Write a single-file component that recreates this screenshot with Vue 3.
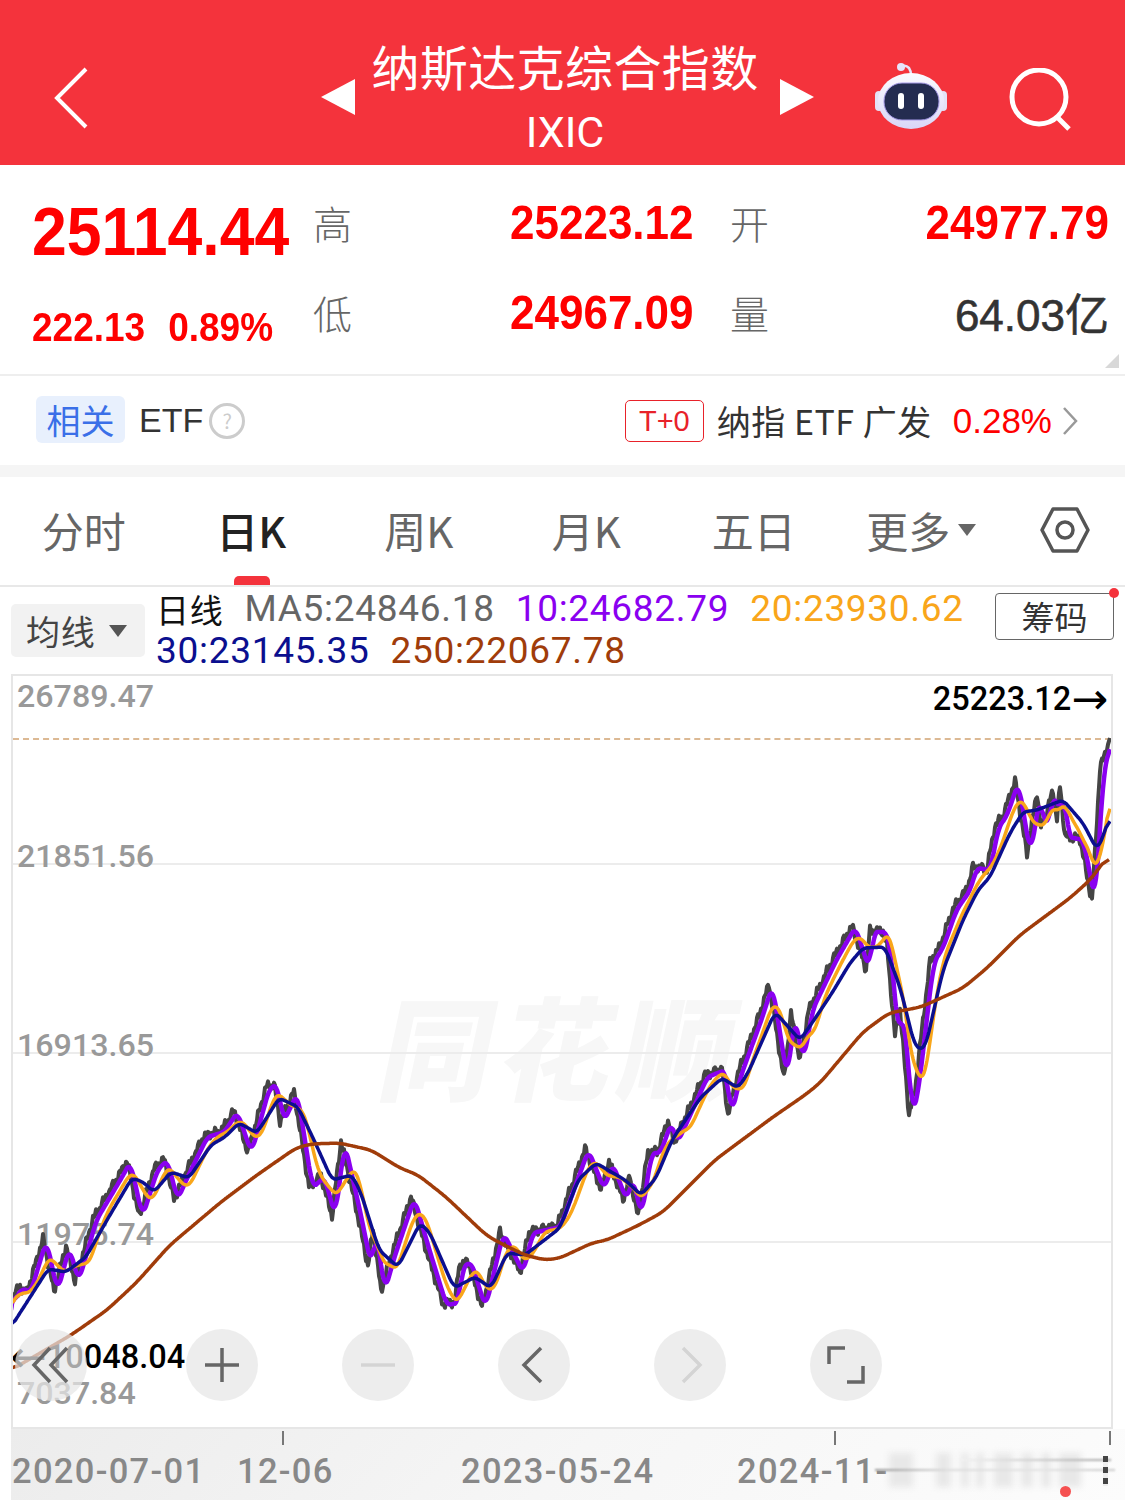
<template>
  <div class="page">
    <header class="top">
      <div class="top-left">
        <svg width="36" height="62" viewBox="0 0 36 62"><path d="M33 2 L4 31 L33 60" fill="none" stroke="#fff" stroke-width="4" /></svg>
      </div>
      <div class="top-mid">
        <i class="tri tri-l"></i>
        <div class="names">
          <div class="name">纳斯达克综合指数</div>
          <div class="code">IXIC</div>
        </div>
        <i class="tri tri-r"></i>
      </div>
      <div class="top-right">
        <svg class="robot" width="76" height="70" viewBox="0 0 76 70">
          <defs>
            <linearGradient id="shell" x1="0" y1="0" x2="0" y2="1">
              <stop offset="0" stop-color="#fbfbff" />
              <stop offset="1" stop-color="#d9d6f7" />
            </linearGradient>
          </defs>
          <path d="M29 7 C28 3 33 3 36 6 Q38 9 38 13" fill="none" stroke="#e6e4fa" stroke-width="2.5" />
          <circle cx="28" cy="5" r="4" fill="#e6e4fa" />
          <rect x="2" y="29" width="8" height="20" rx="4" fill="#e4e2f6" />
          <rect x="66" y="29" width="8" height="20" rx="4" fill="#e4e2f6" />
          <ellipse cx="38" cy="39" rx="33" ry="28" fill="url(#shell)" />
          <rect x="11" y="21" width="55" height="37" rx="18" fill="#242c50" stroke="#a79be8" stroke-width="1" />
          <rect x="25" y="31" width="6" height="16" rx="3" fill="#fff" />
          <rect x="45" y="31" width="6" height="16" rx="3" fill="#fff" />
        </svg>
        <svg class="search" width="64" height="64" viewBox="0 0 64 64">
          <circle cx="30" cy="29" r="27" fill="none" stroke="#fff" stroke-width="5" />
          <path d="M48 49 L60 61" stroke="#fff" stroke-width="5" />
        </svg>
      </div>
    </header>

    <section class="quote">
      <div class="q-main num">25114.44</div>
      <div class="q-label">高</div>
      <div class="q-val num">25223.12</div>
      <div class="q-label">开</div>
      <div class="q-val num right">24977.79</div>
      <div class="q-change num"><span>222.13</span><span>0.89%</span></div>
      <div class="q-label">低</div>
      <div class="q-val num">24967.09</div>
      <div class="q-label">量</div>
      <div class="q-vol right">64.03亿</div>
      <i class="corner"></i>
    </section>

    <section class="etf">
      <span class="etf-tag">相关</span>
      <span class="etf-word">ETF</span>
      <span class="etf-help">?</span>
      <span class="etf-fill"></span>
      <span class="etf-t0">T+0</span>
      <span class="etf-name">纳指 ETF 广发</span>
      <span class="etf-pct">0.28%</span>
      <svg width="16" height="30" viewBox="0 0 16 30"><path d="M2 2 L14 15 L2 28" fill="none" stroke="#999" stroke-width="2.5" /></svg>
    </section>

    <nav class="tabs">
      <div v-for="t in tabs" :key="t" class="tab" :class="{ active: t === '日K' }">{{ t }}</div>
      <div class="tab more">更多<i class="more-caret"></i></div>
      <div class="tab">
        <svg width="52" height="48" viewBox="0 0 52 48">
          <path d="M14 3 H38 L49 24 L38 45 H14 L3 24 Z" fill="none" stroke="#555" stroke-width="3.5" stroke-linejoin="round" />
          <circle cx="26" cy="24" r="8" fill="none" stroke="#555" stroke-width="3.5" />
        </svg>
      </div>
    </nav>

    <section class="ma">
      <div class="ma-btn">均线<i class="ma-caret"></i></div>
      <div class="ma-values">
        <span class="ma-day">日线</span>
        <span class="c-gray">MA5:24846.18</span>
        <span class="c-purple">10:24682.79</span>
        <span class="c-orange">20:23930.62</span>
        <span class="c-navy">30:23145.35</span>
        <span class="c-brown">250:22067.78</span>
      </div>
      <div class="chips">筹码<i class="chips-dot"></i></div>
    </section>

    <section class="chart">
      <div class="watermark">同花顺</div>
      <i v-for="g in grid" :key="g" class="grid-line" :style="{ top: g + 'px' }"></i>
      <i class="high-line"></i>
      <span v-for="l in yLabels" :key="l.text" class="y-label" :style="{ top: l.top + 'px' }">{{ l.text }}</span>
      <svg class="plot" width="1098" height="751" viewBox="13 676 1098 751">
        <polyline :points="gray" class="ln" stroke="#454545" stroke-width="4" />
        <polyline :points="purple" class="ln" stroke="#8a00f0" stroke-width="4.5" />
        <polyline :points="orange" class="ln" stroke="#f9a61a" stroke-width="3.5" />
        <polyline :points="navy" class="ln" stroke="#0b0f8f" stroke-width="3.5" />
        <polyline :points="brown" class="ln" stroke="#a03c0a" stroke-width="3.5" />
      </svg>
      <span class="mark-high">25223.12<b class="arrow">→</b></span>
      <span class="mark-low"><b class="arrow">←</b>10048.04</span>
      <div class="controls">
        <button class="ctl ctl-first">
          <svg width="40" height="40" viewBox="0 0 40 40"><path d="M19 3 L3 20 L19 37 M36 3 L20 20 L36 37" fill="none" stroke="#666" stroke-width="3.5" /></svg>
        </button>
        <button class="ctl">
          <svg width="36" height="36" viewBox="0 0 36 36"><path d="M18 1 V35 M1 18 H35" stroke="#666" stroke-width="3.5" /></svg>
        </button>
        <button class="ctl">
          <svg width="36" height="36" viewBox="0 0 36 36"><path d="M1 18 H35" stroke="#d4d4d4" stroke-width="3.5" /></svg>
        </button>
        <button class="ctl">
          <svg class="chev-l" width="24" height="38" viewBox="0 0 24 38"><path d="M21 2 L4 19 L21 36" fill="none" stroke="#666" stroke-width="3.5" /></svg>
        </button>
        <button class="ctl">
          <svg class="chev-r" width="24" height="38" viewBox="0 0 24 38"><path d="M3 2 L20 19 L3 36" fill="none" stroke="#d4d4d4" stroke-width="3.5" /></svg>
        </button>
        <button class="ctl">
          <svg width="38" height="38" viewBox="0 0 38 38"><path d="M18 2 H2 V18 M36 20 V36 H20" fill="none" stroke="#666" stroke-width="3.5" /></svg>
        </button>
      </div>
    </section>

    <footer class="axis">
      <i v-for="x in ticks" :key="x" class="tick" :style="{ left: x + 'px' }"></i>
      <span v-for="d in dates" :key="d.text" class="date" :style="{ left: d.left + 'px' }">{{ d.text }}</span>
      <i v-for="b in blurBars" :key="b[0]" class="blur-bar" :style="{ left: b[0] + 'px', width: b[1] + 'px' }"></i>
      <i class="blur-line"></i>
      <i class="blur-line upper"></i>
      <i class="blur-ticks"></i>
      <i class="red-dot"></i>
    </footer>
  </div>
</template>

<script setup>
const tabs = ['分时', '日K', '周K', '月K', '五日']

const grid = [187, 376, 565]
const yLabels = [
  { text: '26789.47', top: 0 },
  { text: '21851.56', top: 160 },
  { text: '16913.65', top: 349 },
  { text: '11975.74', top: 538 },
  { text: '7037.84', top: 697 },
]
const ticks = [271, 823, 1098]
const dates = [
  { text: '2020-07-01', left: 1 },
  { text: '12-06', left: 226 },
  { text: '2023-05-24', left: 450 },
  { text: '2024-11-', left: 726 },
]
const blurBars = [[878, 24], [925, 15], [950, 8], [965, 8], [983, 19], [1010, 12], [1030, 10], [1048, 22]]

// traced by eye from the picture, page coordinates
const priceKeys = [
  [11, 1310], [12, 1297], [20, 1288], [27, 1293], [43, 1240], [54, 1292], [66, 1247], [75, 1282], [93, 1220],
  [118, 1178], [127, 1162], [139, 1217], [154, 1170], [164, 1160], [174, 1200], [186, 1173], [204, 1137],
  [221, 1132], [234, 1112], [248, 1153], [266, 1088], [274, 1085], [280, 1122], [294, 1093], [309, 1188],
  [321, 1177], [332, 1217], [341, 1142], [357, 1213], [368, 1267], [373, 1230], [381, 1292], [391, 1257],
  [411, 1198], [425, 1247], [443, 1305], [455, 1303], [459, 1267], [468, 1262], [482, 1308], [500, 1233],
  [520, 1273], [529, 1233], [557, 1227], [585, 1150], [601, 1190], [609, 1163], [623, 1200], [630, 1178],
  [638, 1218], [648, 1153], [657, 1153], [668, 1122], [674, 1143], [704, 1077], [722, 1070], [728, 1115],
  [737, 1077], [759, 1017], [769, 985], [784, 1080], [791, 1015], [800, 1062], [809, 1010], [833, 960],
  [852, 927], [866, 970], [870, 932], [883, 932], [887, 947], [895, 1037], [900, 1010], [909, 1115],
  [915, 1092], [917, 1073], [930, 963], [940, 947], [953, 910], [967, 890], [973, 868], [987, 870],
  [995, 827], [1003, 817], [1015, 782], [1027, 855], [1037, 793], [1041, 830], [1053, 792], [1057, 820],
  [1060, 787], [1065, 837], [1080, 840], [1092, 903], [1100, 770], [1110, 738],
]
const navyKeys = [
  [11, 1327], [43, 1277], [48, 1269], [66, 1272], [86, 1257], [107, 1220], [132, 1178], [143, 1182],
  [154, 1192], [171, 1172], [189, 1178], [211, 1145], [225, 1137], [239, 1123], [257, 1133], [279, 1098],
  [298, 1107], [314, 1140], [332, 1180], [352, 1175], [361, 1193], [379, 1250], [398, 1267], [420, 1223],
  [430, 1233], [454, 1288], [475, 1277], [491, 1288], [507, 1253], [525, 1255], [560, 1228], [578, 1180],
  [596, 1163], [625, 1180], [641, 1195], [656, 1178], [672, 1140], [701, 1097], [722, 1078], [738, 1088],
  [748, 1073], [775, 1012], [800, 1040], [812, 1023], [832, 993], [850, 963], [863, 948], [885, 947],
  [900, 987], [915, 1047], [925, 1049], [943, 970], [963, 920], [978, 890], [990, 877], [1010, 833],
  [1023, 812], [1037, 810], [1063, 800], [1083, 823], [1097, 850], [1103, 837], [1110, 815],
]
const brownKeys = [
  [11, 1370], [71, 1335], [107, 1310], [136, 1283], [170, 1245], [221, 1202], [257, 1175], [296, 1148],
  [311, 1144], [339, 1143], [371, 1150], [400, 1168], [418, 1175], [446, 1197], [486, 1235], [500, 1243],
  [525, 1255], [545, 1260], [560, 1258], [592, 1243], [607, 1240], [639, 1225], [663, 1212], [715, 1160],
  [773, 1117], [805, 1095], [820, 1083], [863, 1032], [889, 1013], [921, 1007], [963, 988], [987, 968],
  [1020, 935], [1070, 898], [1090, 880], [1109, 855],
]

function sample(keys) {
  const out = []
  let k = 0
  for (let x = keys[0][0]; x <= keys[keys.length - 1][0]; x++) {
    while (keys[k + 1][0] < x) k++
    const [x0, y0] = keys[k]
    const [x1, y1] = keys[k + 1]
    out.push([x, y0 + ((y1 - y0) * (x - x0)) / (x1 - x0)])
  }
  return out
}

function trailing(pts, n) {
  return pts.map((p, i) => {
    const from = Math.max(0, i - n + 1)
    let sum = 0
    for (let j = from; j <= i; j++) sum += pts[j][1]
    return [p[0], sum / (i - from + 1)]
  })
}

function centered(pts, n) {
  return pts.map((p, i) => {
    const from = Math.max(0, i - n)
    const to = Math.min(pts.length - 1, i + n)
    let sum = 0
    for (let j = from; j <= to; j++) sum += pts[j][1]
    return [p[0], sum / (to - from + 1)]
  })
}

const str = (pts) => pts.map((p) => p[0] + ',' + p[1].toFixed(1)).join(' ')

const base = sample(priceKeys)
const jagged = base.map((p, i) => {
  const edge = i > base.length - 4 ? 0 : 1
  return [p[0], p[1] + edge * (Math.sin(i * 1.9) * 3 + Math.sin(i * 0.73) * 2.5 - 1)]
})

const gray = str(jagged)
const purple = str(trailing(base, 8))
const orange = str(centered(trailing(base, 20), 3))
const navy = str(centered(sample(navyKeys), 4))
const brown = str(centered(sample(brownKeys), 7))
</script>

<style scoped>
.page {
  --cjk: "Noto Sans CJK SC", sans-serif;
  width: 1125px;
  height: 1500px;
  overflow: hidden;
  background: #fff;
  font-family: "Liberation Sans", "Noto Sans CJK SC", sans-serif;
}

/* header */
.top {
  height: 165px;
  background: #f4333c;
  display: grid;
  grid-template-columns: 1fr auto 1fr;
  color: #fff;
}
.top-left {
  padding: 67px 0 0 53px;
}
.top-mid {
  display: flex;
  align-items: flex-start;
  padding-top: 30px;
  margin-left: 10px;
}
.names {
  text-align: center;
  margin: 0 21px 0 16px;
}
.name {
  font-family: var(--cjk);
  font-size: 48px;
  line-height: 70px;
  font-weight: 400;
  letter-spacing: 0.4px;
  white-space: nowrap;
}
.code {
  font-family: Roboto, sans-serif;
  font-weight: 400;
  font-size: 43px;
  line-height: 50px;
  margin-top: 7px;
}
.tri {
  width: 0;
  height: 0;
  margin-top: 49px;
  border-top: 18px solid transparent;
  border-bottom: 18px solid transparent;
}
.tri-l {
  border-right: 34px solid #fff;
}
.tri-r {
  border-left: 34px solid #fff;
}
.top-right {
  display: flex;
  justify-content: flex-end;
  padding: 62px 52px 0 0;
  gap: 60px;
  align-items: flex-start;
}
.search {
  margin-top: 6px;
}

/* quote */
.quote {
  position: relative;
  height: 211px;
  box-sizing: border-box;
  border-bottom: 2px solid #eee;
  padding: 12px 16px 0 32px;
  display: grid;
  grid-template-columns: 281px 197px 220px 60px 1fr;
  grid-template-rows: 90px 90px;
  align-items: center;
  color: #f00;
}
.num {
  font-weight: 700;
  transform: scaleY(1.1);
  white-space: nowrap;
}
.q-main {
  font-size: 62.5px;
  padding-top: 16px;
}
.q-val {
  font-size: 44px;
}
.q-change {
  font-size: 37px;
  display: flex;
  gap: 23px;
  padding-top: 28px;
}
.q-label {
  font-family: var(--cjk);
  font-size: 39px;
  color: #666;
  font-weight: 300;
}
.q-vol {
  font-size: 44px;
  color: #333;
  -webkit-text-stroke: 0.6px #333;
  white-space: nowrap;
}
.right {
  text-align: right;
}
.corner {
  position: absolute;
  right: 6px;
  bottom: 6px;
  border-left: 14px solid transparent;
  border-bottom: 14px solid #d8d8d8;
}

/* etf row */
.etf {
  height: 89px;
  box-sizing: border-box;
  padding: 0 47px 0 36px;
  display: flex;
  align-items: center;
  font-family: var(--cjk);
  font-size: 34px;
  color: #333;
}
.etf-tag {
  width: 89px;
  height: 47px;
  background: #e8f0fd;
  border-radius: 6px;
  color: #3a6fe8;
  text-align: center;
  line-height: 47px;
  margin-top: -3px;
}
.etf-word {
  margin-left: 14px;
  font-family: "Liberation Sans", sans-serif;
}
.etf-help {
  margin-left: 6px;
  width: 30px;
  height: 30px;
  border: 3px solid #ccc;
  border-radius: 50%;
  color: #ccc;
  font-size: 20px;
  line-height: 30px;
  text-align: center;
}
.etf-fill {
  flex: 1;
}
.etf-t0 {
  width: 77px;
  height: 40px;
  border: 1px solid #e8222a;
  border-radius: 5px;
  color: #e8222a;
  font-family: "Liberation Sans", sans-serif;
  font-size: 29px;
  line-height: 40px;
  text-align: center;
  margin-right: 13px;
}
.etf-name {
  white-space: nowrap;
  letter-spacing: 0.5px;
}
.etf-pct {
  margin-left: 21px;
  margin-right: 10px;
  color: #f00;
  font-family: "Liberation Sans", sans-serif;
  font-size: 35px;
}

/* tabs */
.tabs {
  height: 108px;
  border-top: 12px solid #f5f5f5;
  border-bottom: 2px solid #e8e8e8;
  display: grid;
  grid-template-columns: repeat(6, 167.5px) 1fr;
  align-items: center;
  font-family: var(--cjk);
  font-size: 42px;
  color: #666;
}
.tab {
  position: relative;
  display: flex;
  justify-content: center;
  align-items: center;
  height: 100%;
  padding-bottom: 3px;
  box-sizing: border-box;
}
.tab.active {
  color: #222;
  font-weight: 500;
}
.tab.active::after {
  content: "";
  position: absolute;
  left: 66px;
  bottom: 0;
  width: 36px;
  height: 9px;
  border-radius: 5px 5px 0 0;
  background: #f4333c;
}
.more-caret {
  margin-left: 8px;
  border-left: 9px solid transparent;
  border-right: 9px solid transparent;
  border-top: 12px solid #666;
}

/* ma legend */
.ma {
  height: 87px;
  display: flex;
  padding-left: 11px;
  font-family: Roboto, var(--cjk);
  font-size: 37px;
  letter-spacing: 0.7px;
}
.ma-btn {
  width: 134px;
  height: 53px;
  margin-top: 17px;
  background: #f2f2f2;
  border-radius: 5px;
  font-family: var(--cjk);
  font-size: 34px;
  line-height: 53px;
  color: #444;
  display: flex;
  align-items: center;
  padding-left: 15px;
  box-sizing: border-box;
}
.ma-caret {
  margin-left: 14px;
  border-left: 9px solid transparent;
  border-right: 9px solid transparent;
  border-top: 12px solid #555;
}
.ma-values {
  width: 838px;
  margin-left: 11px;
  display: flex;
  flex-wrap: wrap;
  column-gap: 21px;
  line-height: 42px;
  align-content: flex-start;
  padding-top: 1px;
}
.ma-day {
  font-family: var(--cjk);
  font-size: 33px;
  color: #111;
}
.c-gray {
  color: #666;
}
.c-purple {
  color: #8a00f0;
}
.c-orange {
  color: #f9a61a;
}
.c-navy {
  color: #0b0f8f;
}
.c-brown {
  color: #a03c0a;
}
.chips {
  position: relative;
  box-sizing: border-box;
  width: 119px;
  height: 47px;
  margin: 6px 0 0 1px;
  border: 1.5px solid #666;
  border-radius: 4px;
  font-family: var(--cjk);
  font-size: 33px;
  line-height: 44px;
  text-align: center;
  color: #333;
  letter-spacing: 0;
}
.chips-dot {
  position: absolute;
  right: -6px;
  top: -6px;
  width: 10px;
  height: 10px;
  border-radius: 50%;
  background: #f4333c;
}

/* chart */
.chart {
  position: relative;
  box-sizing: border-box;
  width: 1102px;
  height: 755px;
  margin-left: 11px;
  border: 2px solid #e6e6e6;
  background: #fff;
  overflow: hidden;
}
.watermark {
  position: absolute;
  left: 372px;
  top: 302px;
  font-family: var(--cjk);
  font-size: 112px;
  line-height: 130px;
  font-weight: 900;
  letter-spacing: 8px;
  color: #f7f7f7;
  transform: skewX(-12deg);
  white-space: nowrap;
}
.grid-line {
  position: absolute;
  left: 0;
  right: 0;
  height: 2px;
  background: #ececec;
}
.high-line {
  position: absolute;
  left: 0;
  right: 0;
  top: 62px;
  border-top: 2px dashed #dcb994;
}
.y-label {
  position: absolute;
  left: 4px;
  font-family: Roboto, sans-serif;
  font-weight: 500;
  font-size: 32.2px;
  line-height: 40px;
  color: #999;
}
.plot {
  position: absolute;
  left: 0;
  top: 0;
}
.ln {
  fill: none;
  stroke-linejoin: round;
}
.mark-high,
.mark-low {
  position: absolute;
  font-family: Roboto, sans-serif;
  font-weight: 500;
  font-size: 32.5px;
  line-height: 40px;
  color: #000;
  white-space: nowrap;
  display: flex;
  align-items: center;
}
.arrow {
  font-family: "DejaVu Sans", sans-serif;
  font-weight: 400;
  font-size: 44px;
  line-height: 40px;
}
.mark-high {
  right: 3px;
  top: 3px;
}
.mark-low {
  left: -3px;
  top: 661px;
}
.controls {
  position: absolute;
  left: 2px;
  top: 653px;
  display: flex;
  gap: 84px;
}
.ctl {
  width: 72px;
  height: 72px;
  padding: 0;
  border: 0;
  border-radius: 50%;
  background: rgba(230, 230, 230, 0.72);
  display: flex;
  align-items: center;
  justify-content: center;
}
.ctl-first {
  margin-right: 15px;
}
.chev-l {
  margin-right: 4px;
}
.chev-r {
  margin-left: 4px;
}

/* axis */
.axis {
  position: relative;
  height: 71px;
  margin-left: 11px;
  background: linear-gradient(135deg, #ececec 0%, #f6f6f6 50%, #fcfcfc 100%);
  overflow: hidden;
}
.tick {
  position: absolute;
  top: 2px;
  width: 2px;
  height: 14px;
  background: #777;
}
.date {
  position: absolute;
  top: 20px;
  font-family: Roboto, sans-serif;
  font-weight: 500;
  font-size: 34.5px;
  line-height: 44px;
  letter-spacing: 1.3px;
  color: #888;
  white-space: nowrap;
}
.blur-bar {
  position: absolute;
  top: 24px;
  height: 34px;
  background: #e8e8e8;
  filter: blur(3px);
}
.blur-line {
  position: absolute;
  left: 864px;
  top: 40px;
  width: 240px;
  height: 2px;
  background: linear-gradient(90deg, #999, #ddd 30%, #e4e4e4 70%, #ccc);
  filter: blur(1px);
}
.blur-line.upper {
  left: 950px;
  top: 30px;
  width: 150px;
  background: linear-gradient(90deg, #f2f2f2, #aaa);
}
.blur-ticks {
  position: absolute;
  left: 1092px;
  top: 27px;
  width: 5px;
  height: 30px;
  background: repeating-linear-gradient(180deg, #444 0 6px, #eee 6px 11px);
}
.red-dot {
  position: absolute;
  left: 1049px;
  top: 57px;
  width: 11px;
  height: 11px;
  border-radius: 50%;
  background: #f55050;
}
</style>
